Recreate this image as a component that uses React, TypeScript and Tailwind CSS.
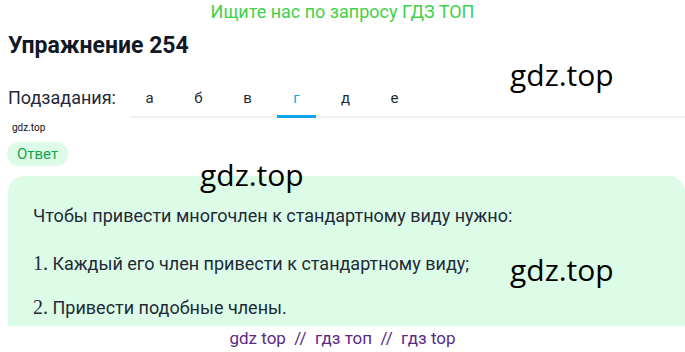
const tabs = ["а", "б", "в", "г", "д", "е"];
const active = "г";

function Watermark({ className }: { className: string }) {
  return (
    <span className={"absolute font-['Open_Sans',sans-serif] text-[30px] leading-[36px] text-black " + className}>
      gdz.top
    </span>
  );
}

export default function App() {
  return (
    <div className="relative w-[685px] h-[352px] overflow-hidden bg-white font-['Roboto',sans-serif] text-[#1f2937]">
      <p className="pt-[1px] text-center text-[18px] leading-[22px] text-[#3fd14a]">Ищите нас по запросу ГДЗ ТОП</p>

      <h1 className="mt-[10px] pl-[8px] text-[23px] leading-[26px] font-bold text-[#111827]">Упражнение 254</h1>

      <div className="mt-[28px] flex items-end">
        <span className="w-[130px] pl-[8px] pb-[9px] text-[18px] leading-[22px] text-[#1f2937]">Подзадания:</span>
        <div className="flex flex-1 gap-[10px] border-b-2 border-[#eef0f2]">
          {tabs.map((t) => (
            <div
              key={t}
              className={
                "-mb-[2px] w-[39px] border-b-[3px] pb-[7px] text-center text-[15px] leading-[20px] " +
                (t === active ? "border-[#0ea5e9] text-[#0ea5e9]" : "border-transparent text-[#1f2937]")
              }
            >
              {t}
            </div>
          ))}
        </div>
      </div>

      <p className="mt-[4px] pl-[12px] text-[10px] leading-[12px] text-[#111]">gdz.top</p>

      <div className="mt-[8px] ml-[7px] flex h-[24px] w-[61px] items-center justify-center rounded-full bg-[#dcfce7] text-[15px] text-[#16a34a]">
        Ответ
      </div>

      <div className="mt-[10px] ml-[8px] h-[150px] rounded-t-[16px] bg-[#dcfce7] pl-[25px] pt-[29px] text-[18px] leading-[22px] text-[#1f2937]">
        <p>Чтобы привести многочлен к стандартному виду нужно:</p>
        <p className="mt-[25px]">
          <span className="font-['Liberation_Serif',serif] text-[20px]">1.</span> Каждый его член привести к стандартному виду;
        </p>
        <p className="mt-[21px]">
          <span className="font-['Liberation_Serif',serif] text-[20px]">2.</span> Привести подобные члены.
        </p>
      </div>

      <p className="mt-[1px] text-center text-[17px] leading-[22px] text-[#5b2a86]">
        gdz top&nbsp; //&nbsp; гдз топ&nbsp; //&nbsp; гдз top
      </p>

      <Watermark className="left-[510px] top-[57px]" />
      <Watermark className="left-[200px] top-[157px]" />
      <Watermark className="left-[510px] top-[252px]" />
    </div>
  );
}
